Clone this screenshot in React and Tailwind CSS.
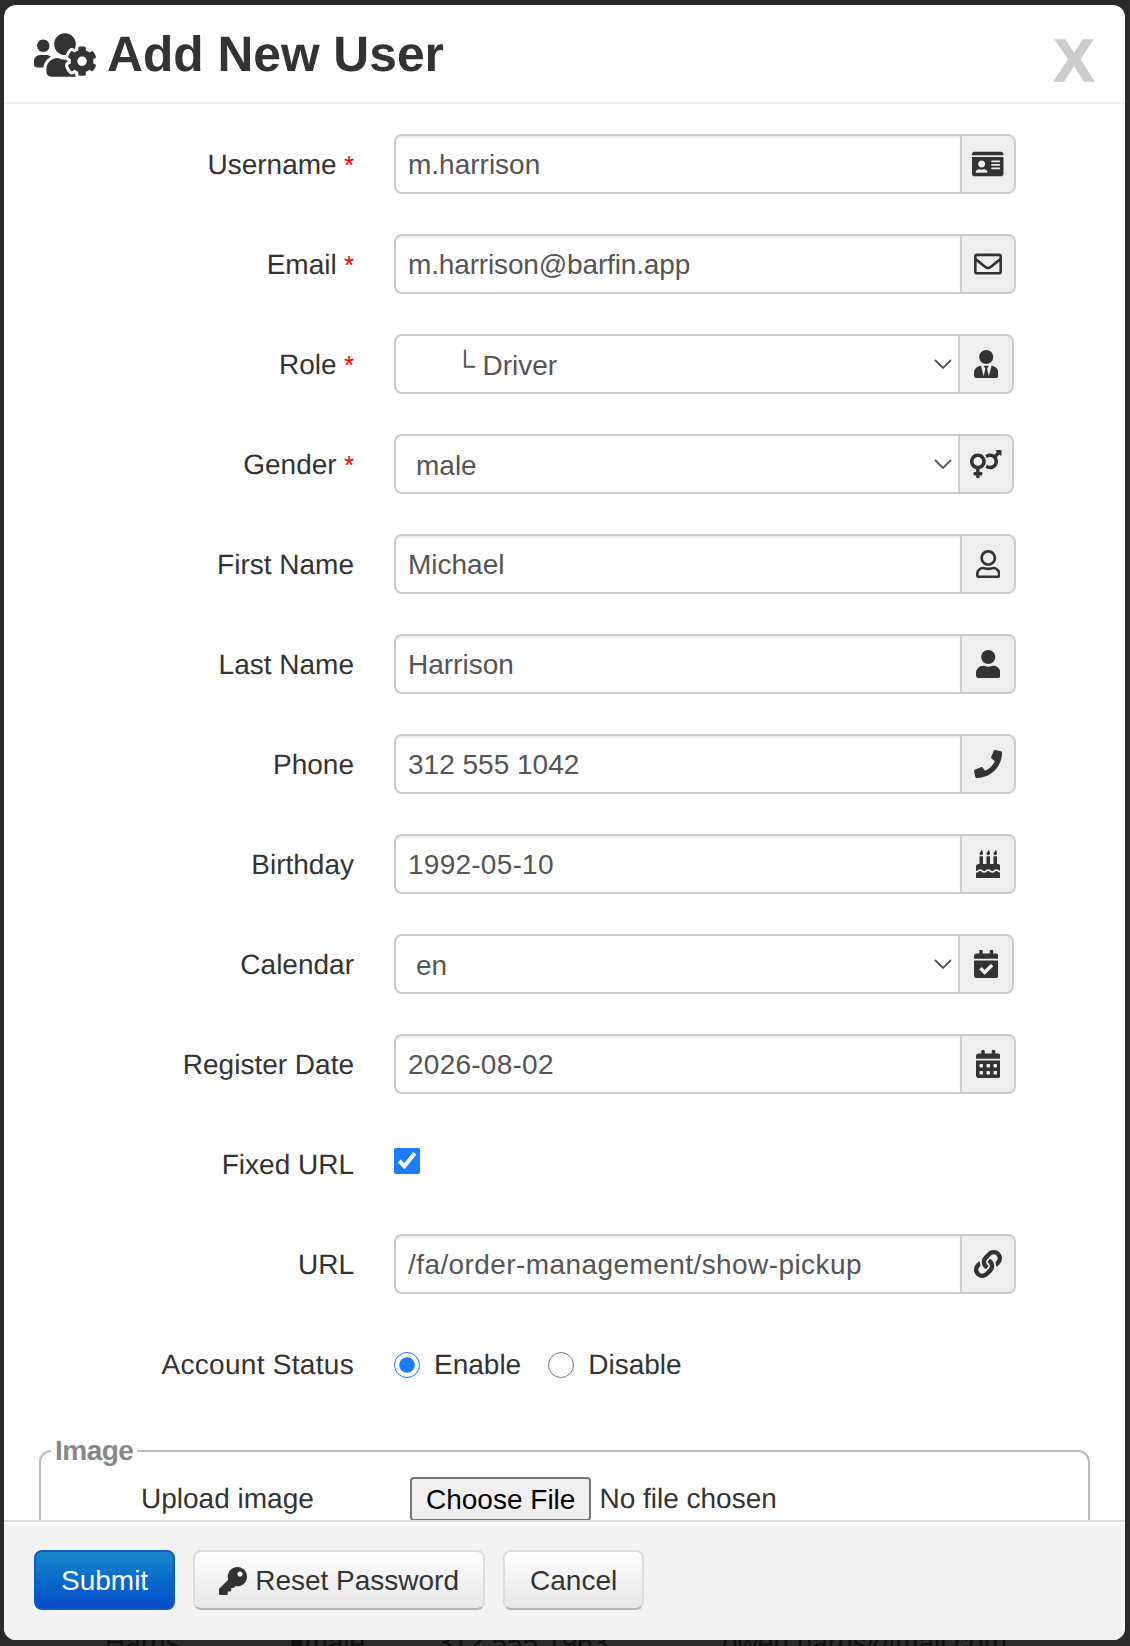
import React from 'react';
import {
    FaIdCard, FaRegEnvelope, FaUserTie, FaVenusMars, FaRegUser, FaUser, FaPhone,
    FaBirthdayCake, FaCalendarCheck, FaCalendarAlt, FaLink, FaUsersCog, FaKey,
} from 'react-icons/fa';

const FONT = "font-['Liberation_Sans',Arial,sans-serif]";

const Label = ({ text, required, tracking = '' }) => (
    <label className={`w-[350px] shrink-0 pt-[2px] text-right text-[28px] leading-[40px] text-[#333] ${tracking}`}>
        {text}
        {required && <span className="text-[26px] text-[#f00]"> *</span>}
    </label>
);

const Addon = ({ icon: Icon, className }) => (
    <span className="flex items-center justify-center w-[56px] -ml-[2px] shrink-0 bg-[#eee] border-2 border-[#ccc] rounded-r-lg">
        <Icon className={`${className} text-[#333]`} />
    </span>
);

const TextRow = ({ label, required, value, icon, iconClass, tracking = '' }) => (
    <div className="flex items-center gap-10 h-[60px]">
        <Label text={label} required={required} />
        <div className="flex w-[622px] h-[60px]">
            <input
                type="text"
                readOnly
                value={value}
                className={`flex-1 min-w-0 px-3 pt-[2px] border-2 border-[#ccc] rounded-l-lg text-[28px] text-[#555] bg-white outline-none shadow-[inset_0_2px_2px_rgba(0,0,0,0.075)] ${tracking}`}
            />
            <Addon icon={icon} className={iconClass} />
        </div>
    </div>
);

const SelectRow = ({ label, required, value, icon, iconClass }) => (
    <div className="flex items-center gap-10 h-[60px]">
        <Label text={label} required={required} />
        <div className="flex w-[620px] h-[60px]">
            <div className="relative flex-1 min-w-0">
                <select
                    value={value}
                    onChange={() => {}}
                    className="appearance-none w-full h-full pl-[20px] pr-10 pt-[4px] border-2 border-[#ccc] rounded-l-lg text-[28px] text-[#555] bg-white outline-none"
                >
                    <option value={value}>{value}</option>
                </select>
                <svg viewBox="0 0 18 10" className="absolute right-[8px] top-[25px] w-[18px] h-[10px] pointer-events-none" fill="none" stroke="#555" strokeWidth="1.8">
                    <path d="M1 1l8 8 8-8" />
                </svg>
            </div>
            <Addon icon={icon} className={iconClass} />
        </div>
    </div>
);

const App = () => {
    return (
        <div className={`${FONT} [text-rendering:geometricPrecision] h-[1646px] overflow-hidden bg-[#2a2a2a] pt-[5px] pl-1 pr-[5px]`}>
            <div className="relative z-10 flex flex-col h-[1635px] bg-white rounded-xl overflow-hidden">
                {/* Header */}
                <div className="flex items-center justify-between shrink-0 h-[99px] pl-[30px] pr-[31px] border-b-2 border-[#eee]">
                    <h1 className="flex items-center gap-[11px] mt-[2px] text-[49.7px] leading-none font-bold text-[#333]">
                        <FaUsersCog className="w-[62px] h-[50px]" />
                        Add New User
                    </h1>
                    <button className="text-[60px] leading-none font-bold text-[#ccc] mt-[14px] [-webkit-text-stroke:1.5px_#ccc]">X</button>
                </div>

                {/* Body */}
                <div className="flex-1 min-h-0 overflow-hidden pt-[30px]">
                    <div className="flex flex-col gap-10">
                        <TextRow label="Username" required value="m.harrison" icon={FaIdCard} iconClass="w-[31.5px] h-[28px]" />
                        <TextRow label="Email" required value="m.harrison@barfin.app" icon={FaRegEnvelope} iconClass="w-[28px] h-[28px]" tracking="tracking-[-0.15px]" />
                        <SelectRow label="Role" required value={'\u00a0\u00a0\u00a0\u00a0\u00a0└ Driver'} icon={FaUserTie} iconClass="w-[24.5px] h-[28px]" />
                        <SelectRow label="Gender" required value="male" icon={FaVenusMars} iconClass="w-[31.5px] h-[28px]" />
                        <TextRow label="First Name" value="Michael" icon={FaRegUser} iconClass="w-[24.5px] h-[28px]" />
                        <TextRow label="Last Name" value="Harrison" icon={FaUser} iconClass="w-[24.5px] h-[28px]" />
                        <TextRow label="Phone" value="312 555 1042" icon={FaPhone} iconClass="w-[28px] h-[28px]" />
                        <TextRow label="Birthday" value="1992-05-10" icon={FaBirthdayCake} iconClass="w-[24.5px] h-[28px]" tracking="tracking-[0.25px]" />
                        <SelectRow label="Calendar" value="en" icon={FaCalendarCheck} iconClass="w-[24.5px] h-[28px]" />
                        <TextRow label="Register Date" value="2026-08-02" icon={FaCalendarAlt} iconClass="w-[24.5px] h-[28px]" tracking="tracking-[0.25px]" />

                        <div className="flex items-center gap-10 h-[60px]">
                            <Label text="Fixed URL" />
                            <input type="checkbox" readOnly checked className="w-[26px] h-[26px] accent-[#1a7cff] -mt-[6px]" />
                        </div>

                        <TextRow label="URL" value="/fa/order-management/show-pickup" icon={FaLink} iconClass="w-[28px] h-[28px]" tracking="tracking-[0.42px]" />

                        <div className="flex items-center gap-10 h-[60px]">
                            <Label text="Account Status" tracking="tracking-[0.3px]" />
                            <div className="flex items-center pt-[2px] text-[28px] text-[#333]">
                                <input type="radio" readOnly checked name="status" className="w-[26px] h-[26px] accent-[#1a7cff] m-0" />
                                <span className="ml-[14px]">Enable</span>
                                <input type="radio" readOnly name="status" className="w-[26px] h-[26px] m-0 ml-[27px]" />
                                <span className="ml-[14px]">Disable</span>
                            </div>
                        </div>
                    </div>

                    {/* Image fieldset, cut off by the footer */}
                    <fieldset className="mt-[41px] mx-[35px] border-2 border-[#bbb] rounded-xl px-[10px] h-[120px]">
                        <legend className="text-[28px] leading-[32px] text-[#888] font-bold tracking-[-0.5px] px-[4px]">Image</legend>
                        <div className="flex items-center text-[28px] text-[#333] mt-[10px]">
                            <span className="ml-[90px] w-[269px]">Upload image</span>
                            <button className="h-[44px] px-[14px] bg-[#efefef] border-2 border-[#767676] rounded text-black">Choose File</button>
                            <span className="ml-[8px]">No file chosen</span>
                        </div>
                    </fieldset>
                </div>

                {/* Footer */}
                <div className="shrink-0 h-[120px] flex items-start gap-[18px] pl-[30px] pt-[28px] bg-[#f3f3f3] border-t-2 border-[#ddd] shadow-[inset_0_2px_0_#fff]">
                    <button className="h-[60px] px-[25px] pt-[2px] rounded-lg border-2 border-[#0b5fb8] bg-gradient-to-b from-[#1a87cc] to-[#0a4bc8] text-white text-[28px]">Submit</button>
                    <button className="flex items-center gap-2 h-[60px] pl-[24px] pr-[24px] pt-[2px] rounded-lg border-2 border-[#ddd] border-b-[#b5b5b5] bg-gradient-to-b from-white to-[#e6e6e6] text-[#333] text-[28px]">
                        <FaKey className="w-[28px] h-[28px]" />
                        Reset Password
                    </button>
                    <button className="h-[60px] px-[25px] pt-[2px] rounded-lg border-2 border-[#ddd] border-b-[#b5b5b5] bg-gradient-to-b from-white to-[#e6e6e6] text-[#333] text-[28px]">Cancel</button>
                </div>
            </div>

            {/* Table row behind the modal, only a sliver shows */}
            <div className="flex -mt-[12px] h-[30px] text-[28px] leading-[30px] text-[#0f0f0f]">
                <span className="w-[101px] shrink-0">&nbsp;</span>
                <span className="w-[184px] shrink-0">Harris</span>
                <span className="w-[148px] shrink-0">&#9646;male</span>
                <span className="w-[285px] shrink-0">312 555 1963</span>
                <span>owen.harris@mail.com</span>
            </div>
        </div>
    );
};

export default App;
